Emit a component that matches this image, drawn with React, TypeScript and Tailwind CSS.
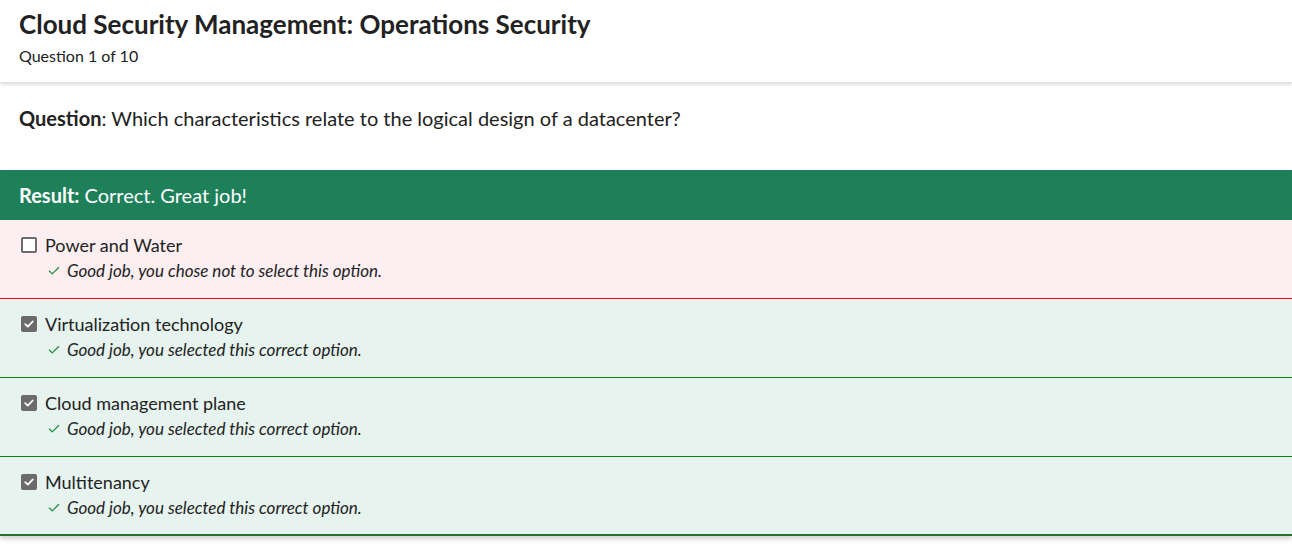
import { Check } from "lucide-react";

type Option = {
  label: string;
  checked: boolean;
  feedback: string;
  tone: "wrong" | "right";
};

const OPTIONS: Option[] = [
  { label: "Power and Water", checked: false, feedback: "Good job, you chose not to select this option.", tone: "wrong" },
  { label: "Virtualization technology", checked: true, feedback: "Good job, you selected this correct option.", tone: "right" },
  { label: "Cloud management plane", checked: true, feedback: "Good job, you selected this correct option.", tone: "right" },
  { label: "Multitenancy", checked: true, feedback: "Good job, you selected this correct option.", tone: "right" },
];

function Box({ checked }: { checked: boolean }) {
  if (checked) {
    return (
      <span className="flex h-[16px] w-[16px] shrink-0 items-center justify-center rounded-[2px] bg-[#6b6b6b]">
        <svg width="12" height="12" viewBox="0 0 12 12" fill="none">
          <path d="M2.2 6.2 L4.8 8.6 L9.8 3.4" stroke="#fff" strokeWidth="1.7" strokeLinecap="round" strokeLinejoin="round" />
        </svg>
      </span>
    );
  }
  return <span className="h-[16px] w-[16px] shrink-0 rounded-[2px] border-2 border-[#6b6b6b] bg-white" />;
}

export default function App() {
  return (
    <div className="min-h-[544px] bg-white font-['Lato','Liberation_Sans',sans-serif] text-[#222]">
      <header className="relative z-10 border-b border-[#e2e2e2] bg-white px-[19px] pt-[8px] pb-[16px] shadow-[0_2px_3px_rgba(0,0,0,0.12)]">
        <h1 className="text-[26px] font-bold leading-[32px]">
          Cloud Security Management: Operations Security
        </h1>
        <div className="mt-[6px] text-[16px] leading-[20px]">Question 1 of 10</div>
      </header>

      <div className="px-[19px] pt-[22px] pb-[39px] text-[20px] leading-[26px]">
        <span className="font-bold">Question</span>: Which characteristics relate to the logical design of a datacenter?
      </div>

      <div className="shadow-[0_3px_5px_rgba(0,0,0,0.18)]">
        <div className="flex h-[50px] items-center bg-[#1d8059] px-[19px] text-[20px] text-white">
          <span className="font-bold">Result:</span>
          <span className="ml-[5px]">Correct. Great job!</span>
        </div>

        {OPTIONS.map((o, i) => (
          <div
            key={o.label}
            className={
              o.tone === "wrong"
                ? "h-[79px] border-b border-[#ff0000] bg-[#fdeef1] px-[21px] pt-[14px]"
                : i === OPTIONS.length - 1
                  ? "h-[79px] border-b-2 border-[#26732a] bg-[#e6f3ee] px-[21px] pt-[14px]"
                  : "h-[79px] border-b border-[#008a00] bg-[#e6f3ee] px-[21px] pt-[14px]"
            }
          >
            <div className="flex items-center gap-[8px] text-[18px] leading-[22px]">
              <Box checked={o.checked} />
              <span>{o.label}</span>
            </div>
            <div className="mt-[5px] flex items-center gap-[6px] pl-[26px] text-[17px] italic leading-[20px]">
              <Check size={14} strokeWidth={2} className="text-[#1d8a3a]" />
              <span>{o.feedback}</span>
            </div>
          </div>
        ))}
      </div>
    </div>
  );
}
